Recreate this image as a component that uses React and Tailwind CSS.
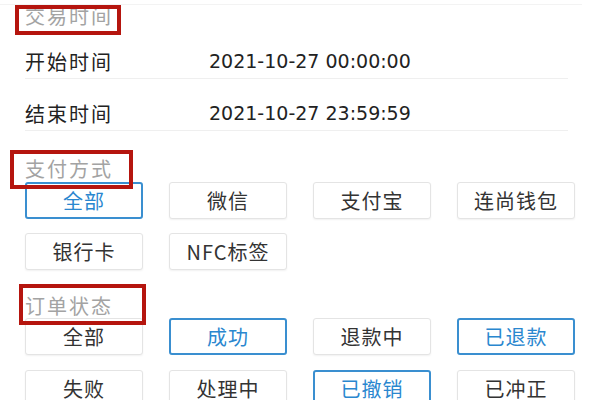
import React from "react";

const cjk = { fontFamily: '"Noto Sans CJK SC", "Noto Sans", sans-serif' };
const num = { fontFamily: '"DejaVu Sans", "Noto Sans CJK SC", sans-serif' };

const payTypes = [
  { label: "全部", active: true },
  { label: "微信" },
  { label: "支付宝" },
  { label: "连尚钱包" },
  { label: "银行卡" },
  { label: "NFC标签" },
];

const orderStates = [
  { label: "全部" },
  { label: "成功", active: true },
  { label: "退款中" },
  { label: "已退款", active: true },
  { label: "失败" },
  { label: "处理中" },
  { label: "已撤销", active: true },
  { label: "已冲正" },
];

const SectionTitle = ({ children, className = "" }) => (
  <div className={`h-6 flex items-center text-[20px] tracking-[2px] text-[#a3a3a3] ${className}`}>
    {children}
  </div>
);

const Chip = ({ label, active }) => (
  <button
    className={`h-[37px] flex items-center justify-center rounded-[3px] bg-white text-[20px] tracking-[1px] ${
      active
        ? "border-2 border-[#3a8fd0] text-[#2a87cf]"
        : "border border-[#e4e4e4] text-[#333] shadow-[0_1px_2px_rgba(0,0,0,0.06)]"
    }`}
  >
    {label}
  </button>
);

const TimeRow = ({ label, value }) => (
  <div className="h-[52px] pt-[18px] flex items-center border-b border-[#efefef] mr-[7px]">
    <span className="w-[184px] text-[20px] tracking-[2px] text-[#222]">{label}</span>
    <span className="text-[19px] text-[#222]" style={num}>
      {value}
    </span>
  </div>
);

export default function App() {
  return (
    <div className="relative w-[600px] h-[400px] overflow-hidden bg-white" style={cjk}>
      <div className="mt-[4px] h-px bg-[#f3f3f3] mr-[18px]" />
      <div className="px-[25px]">
        <SectionTitle className="mt-[-1px] h-[23px]">交易时间</SectionTitle>
        <TimeRow label="开始时间" value="2021-10-27 00:00:00" />
        <TimeRow label="结束时间" value="2021-10-27 23:59:59" />

        <SectionTitle className="mt-[26px] mb-[1px]">支付方式</SectionTitle>
        <div className="grid grid-cols-4 gap-x-[26px] gap-y-[14px]">
          {payTypes.map((t) => (
            <Chip key={t.label} {...t} />
          ))}
        </div>

        <SectionTitle className="mt-[24px]">订单状态</SectionTitle>
        <div className="grid grid-cols-4 gap-x-[26px] gap-y-[15px]">
          {orderStates.map((t) => (
            <Chip key={t.label} {...t} />
          ))}
        </div>
      </div>

      {/* annotation boxes */}
      <div className="absolute left-[15px] top-[5px] w-[106px] h-[30px] border-4 border-[#b5150e]" />
      <div className="absolute left-[10px] top-[150px] w-[123px] h-[39px] border-4 border-[#b5150e]" />
      <div className="absolute left-[19px] top-[284px] w-[127px] h-[41px] border-4 border-[#b5150e]" />
    </div>
  );
}
